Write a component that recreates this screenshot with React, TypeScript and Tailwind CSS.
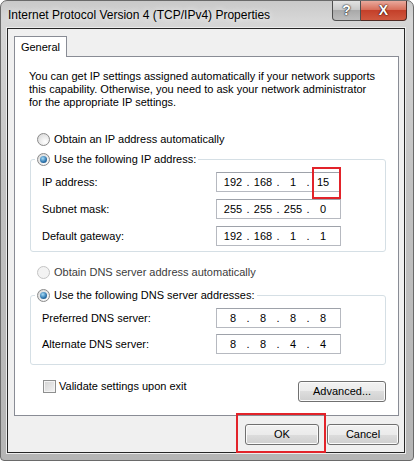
import React from 'react';

const font = "font-['Segoe_UI','Liberation_Sans',Arial,sans-serif]";

function Radio({ checked, disabled }: { checked?: boolean; disabled?: boolean }) {
    return (
        <span
            className={
                disabled
                    ? 'flex h-[13px] w-[13px] shrink-0 items-center justify-center rounded-full border border-[#c4c4c4] bg-[#f3f3f3]'
                    : 'flex h-[13px] w-[13px] shrink-0 items-center justify-center rounded-full border border-[#8a8a8a] bg-[radial-gradient(circle_at_65%_70%,#ffffff,#d4d4d4)]'
            }
        >
            {checked && (
                <span className="h-[7px] w-[7px] rounded-full bg-[radial-gradient(circle_at_40%_35%,#a6dcf7,#2b72ab_60%,#143f66)]" />
            )}
        </span>
    );
}

function IpBox({ parts, marked }: { parts: string[]; marked?: boolean }) {
    return (
        <div className="relative flex h-[20px] w-[125px] items-center border border-[#b6b9c0] border-t-[#9ea2aa] bg-white pl-[4px] text-[11px] text-black">
            {parts.map((p, i) => (
                <React.Fragment key={i}>
                    {i > 0 && <span className="w-[6px] text-center">.</span>}
                    <span className="w-[24px] text-center">{p}</span>
                </React.Fragment>
            ))}
            {marked && (
                <span className="pointer-events-none absolute right-[-1px] top-[-6px] h-[32px] w-[29px] border-2 border-[#e2232a]" />
            )}
        </div>
    );
}

function Row({ label, parts, marked }: { label: string; parts: string[]; marked?: boolean }) {
    return (
        <div className="flex items-center pl-[11px]">
            <span className="w-[174px]">{label}</span>
            <IpBox parts={parts} marked={marked} />
        </div>
    );
}

const btn =
    'flex h-[21px] items-center justify-center rounded-[3px] border border-[#707070] bg-[linear-gradient(#f2f2f2,#ebebeb_50%,#dddddd_50%,#cfcfcf)] shadow-[inset_0_0_0_1px_#fbfbfb] text-[11px] text-black';

export default function App() {
    return (
        <div className={`${font} flex h-[461px] w-[414px] flex-col whitespace-nowrap rounded-t-[7px] rounded-b-[4px] border border-[#6a6a6a] bg-[linear-gradient(#c9c9c9,#d6d6d6_4%,#c2c2c2_40%,#b5b5b5)] text-[11px] text-black`}>
            {/* title bar */}
            <div className="flex h-[27px] shrink-0 items-start justify-between">
                <div className="flex h-[27px] items-center pl-[7px] text-[12px] [text-shadow:0_0_6px_#ffffff]">
                    Internet Protocol Version 4 (TCP/IPv4) Properties
                </div>
                <div className="mr-[6px] flex">
                    <div className="flex h-[20px] w-[29px] items-center justify-center rounded-bl-[4px] border border-t-0 border-[#4f4f4f] bg-[linear-gradient(#e2e2e2,#c9c9c9_45%,#a9a9a9_50%,#bdbdbd)] text-[14px] font-bold text-white [text-shadow:0_0_2px_#222,0_0_1px_#000]">
                        ?
                    </div>
                    <div className="flex h-[20px] w-[46px] items-center justify-center rounded-br-[4px] border border-l-0 border-t-0 border-[#4f2a24] bg-[linear-gradient(#e9a99c,#d8705c_45%,#c4402a_50%,#d0583f)] text-[14px] font-bold text-white [text-shadow:0_0_2px_#3a0a00,0_0_1px_#000]">
                        X
                    </div>
                </div>
            </div>

            {/* client area */}
            <div className="ml-[6px] mr-[8px] flex h-[425px] shrink-0 flex-col border border-[#262626] bg-[#f0f0f0] shadow-[0_0_0_1px_#ececec]">
                <div className="ml-[6px] mt-[7px] flex">
                    <div className="relative z-10 -mb-px flex h-[21px] w-[53px] items-center justify-center border border-b-0 border-[#898c95] bg-white">
                        General
                    </div>
                </div>
                <div className="ml-[6px] flex h-[360px] w-[385px] flex-col border border-[#898c95] bg-white">
                    <p className="pl-[14px] pt-[13px] leading-[13px]">
                        You can get IP settings assigned automatically if your network supports
                        <br />
                        this capability. Otherwise, you need to ask your network administrator
                        <br />
                        for the appropriate IP settings.
                    </p>

                    <label className="ml-[22px] mt-[22px] flex h-[16px] items-center gap-[4px]">
                        <Radio />
                        Obtain an IP address automatically
                    </label>

                    <fieldset className="ml-[15px] mt-[4px] w-[356px] rounded-[3px] border border-[#d5dfe5] pb-[5px]">
                        <legend className="ml-[4px] flex h-[16px] items-center gap-[4px] px-[2px]">
                            <Radio checked />
                            Use the following IP address:
                        </legend>
                        <div className="mt-[5px] flex flex-col gap-[7px]">
                            <Row label="IP address:" parts={['192', '168', '1', '15']} marked />
                            <Row label="Subnet mask:" parts={['255', '255', '255', '0']} />
                            <Row label="Default gateway:" parts={['192', '168', '1', '1']} />
                        </div>
                    </fieldset>

                    <label className="ml-[22px] mt-[12px] flex h-[16px] items-center gap-[4px] text-[#3c3c3c]">
                        <Radio disabled />
                        Obtain DNS server address automatically
                    </label>

                    <fieldset className="ml-[15px] mt-[7px] w-[356px] rounded-[3px] border border-[#d5dfe5] pb-[10px]">
                        <legend className="ml-[4px] flex h-[16px] items-center gap-[4px] px-[2px]">
                            <Radio checked />
                            Use the following DNS server addresses:
                        </legend>
                        <div className="mt-[5px] flex flex-col gap-[6px]">
                            <Row label="Preferred DNS server:" parts={['8', '8', '8', '8']} />
                            <Row label="Alternate DNS server:" parts={['8', '8', '4', '4']} />
                        </div>
                    </fieldset>

                    <div className="mt-[15px] flex items-start justify-between pl-[28px] pr-[12px]">
                        <label className="flex h-[13px] items-center gap-[3px]">
                            <span className="h-[13px] w-[13px] border border-[#8e8f8f] bg-[linear-gradient(135deg,#d2d2d2,#f4f4f4)] shadow-[inset_0_0_0_1px_#f4f4f4]" />
                            Validate settings upon exit
                        </label>
                        <button className={`${btn} mt-px h-[20px] w-[88px]`}>Advanced...</button>
                    </div>
                </div>

                <div className="mt-[8px] flex justify-end gap-[8px] pr-[5px]">
                    <div className="relative">
                        <button className={`${btn} w-[74px] border-[#3c7fb1] shadow-[inset_0_0_0_1px_#c3e6f8]`}>OK</button>
                        <span className="pointer-events-none absolute bottom-[-8px] left-[-9px] right-[-7px] top-[-11px] border-2 border-[#e2232a]" />
                    </div>
                    <button className={`${btn} w-[72px]`}>Cancel</button>
                </div>
            </div>
        </div>
    );
}
